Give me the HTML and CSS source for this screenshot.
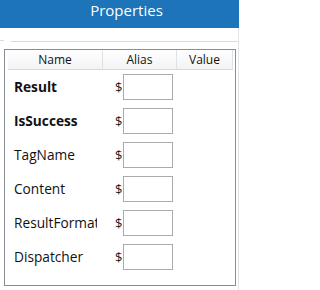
FILE: index.html
```html
<!DOCTYPE html>
<html>
<head>
<meta charset="utf-8">
<link rel="stylesheet" href="styles.css">
</head>
<body>
<div class="title">Properties</div>
<div class="main">
  <div class="gb-top"><span class="seg-a"></span><span class="seg-b"></span></div>
  <div class="grid">
    <div class="hdr">
      <div class="hc c-name">Name</div>
      <div class="hc c-alias">Alias</div>
      <div class="hc c-value">Value</div>
    </div>
    <div class="row"><div class="rc-name bold">Result</div><div class="rc-alias"><span class="dollar">$</span><span class="box"></span></div></div>
    <div class="row"><div class="rc-name bold">IsSuccess</div><div class="rc-alias"><span class="dollar">$</span><span class="box"></span></div></div>
    <div class="row"><div class="rc-name">TagName</div><div class="rc-alias"><span class="dollar">$</span><span class="box"></span></div></div>
    <div class="row"><div class="rc-name">Content</div><div class="rc-alias"><span class="dollar">$</span><span class="box"></span></div></div>
    <div class="row"><div class="rc-name">ResultFormat</div><div class="rc-alias"><span class="dollar">$</span><span class="box"></span></div></div>
    <div class="row"><div class="rc-name">Dispatcher</div><div class="rc-alias"><span class="dollar">$</span><span class="box"></span></div></div>
  </div>
</div>
</body>
</html>
```
FILE: styles.css
```css
html, body {
  margin: 0;
  padding: 0;
  background: #ffffff;
}
body {
  width: 239px;
  height: 290px;
  overflow: hidden;
  font-family: "Open Sans", "Noto Sans", sans-serif;
  color: #111111;
}
.title {
  height: 28px;
  background: #1d74b9;
  color: #ffffff;
  font-size: 15px;
  line-height: 21px;
  padding-left: 14px;
  text-align: center;
  box-sizing: border-box;
}
.main {
  width: 239px;
  height: 262px;
  box-sizing: border-box;
  border-right: 1px solid #e2e6ea;
  padding-top: 12px;
}
.gb-top {
  display: flex;
  height: 2px;
}
.seg-a {
  width: 4px;
  height: 1px;
  background: #d6dbe0;
  align-self: flex-start;
}
.seg-b {
  flex: 1;
  height: 1px;
  margin-left: 7px;
  background: #d6dbe0;
  align-self: flex-end;
}
.grid {
  margin: 7px 0 0 4px;
  width: 232px;
  height: 237px;
  border: 1px solid #8a8d95;
  box-sizing: border-box;
  padding-left: 3px;
}
.hdr {
  display: flex;
  width: 225px;
  height: 20px;
  box-sizing: border-box;
  border-bottom: 1px solid #d5dae0;
  background: linear-gradient(#ffffff, #f2f3f5);
}
.hc {
  box-sizing: border-box;
  border-right: 1px solid #dde2e7;
  text-align: center;
  font-size: 12px;
  line-height: 19px;
  color: #111111;
}
.c-name { width: 95px; }
.c-alias { width: 74px; }
.c-value { width: 56px; }
.row {
  display: flex;
  align-items: center;
  height: 34px;
}
.rc-name {
  width: 89px;
  margin-right: 6px;
  box-sizing: border-box;
  padding-left: 6px;
  overflow: hidden;
  white-space: nowrap;
  font-size: 13.7px;
  line-height: 18px;
  color: #111111;
}
.bold { font-weight: bold; }
.rc-alias {
  width: 74px;
  box-sizing: border-box;
  padding-left: 12px;
  display: flex;
  align-items: center;
}
.dollar {
  width: 6px;
  margin-right: 2px;
  font-size: 13px;
  line-height: 18px;
  color: #1a1a1a;
}
.box {
  width: 50px;
  height: 26px;
  box-sizing: border-box;
  border: 1px solid #ababab;
  background: #ffffff;
}
```
